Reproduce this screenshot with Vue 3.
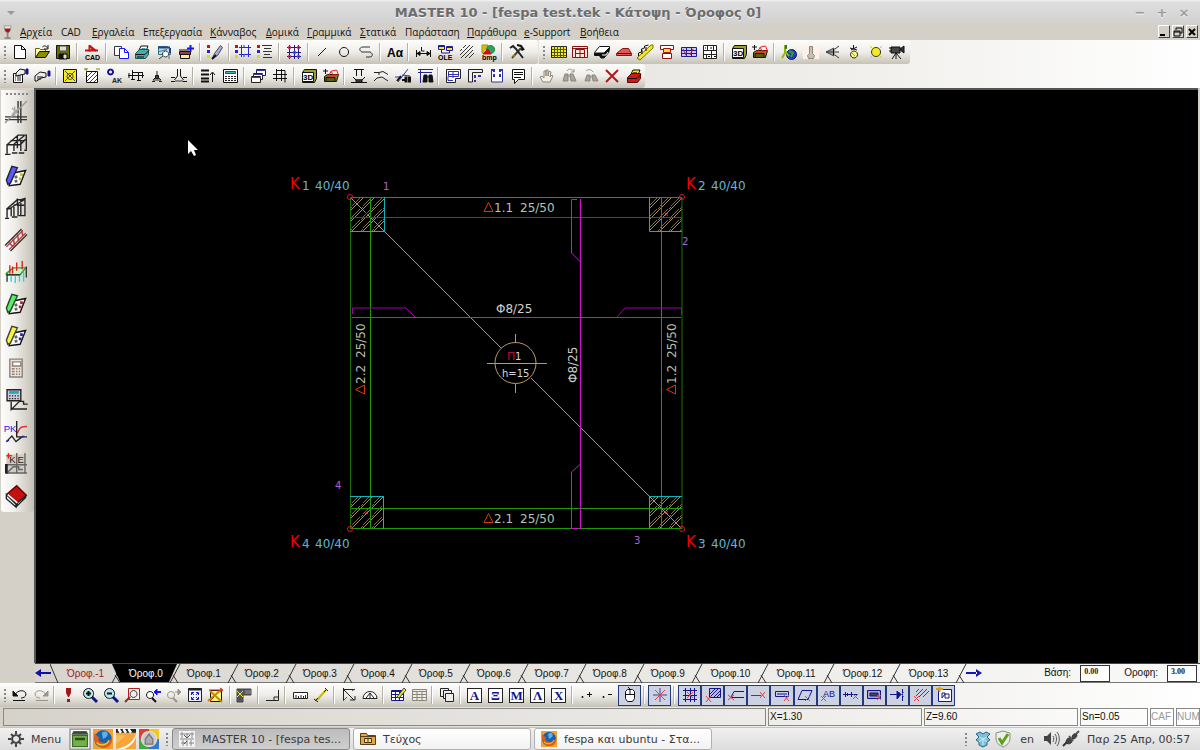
<script setup>
import { h, ref } from 'vue'

const K = '#111', N = '#14148c', R = '#d01010', G = '#9a9488', Y = '#f4ec20', T = 'text'

// Each shape is [path, stroke, fill, stroke width]; each caption is [T, string, x, y, size, colour].
const icons = {
  new: [['M2.5 1.5h7l4 4v9h-11zM9.5 1.5v4h4', K, '#fff']],
  open: [['M1.5 13.5v-9h4l1 1h5v3', '#666600', '#ffffa0'], ['M1.5 13.5l4-6h10l-4 6z', K, '#8c8c00'], ['M8.5 3c2-2 4-1 5 1M14 1v4h-4', K]],
  save: [['M1.5 1.5h13v13h-13z', K, '#6b6b00'], ['M4.5 2h7v5h-7z', '#555', '#deded2'], ['M4 10h8v5H4z', K, K], ['M9 11h2v3H9z', '#ddd', '#ddd']],
  cad: [['M5.5 1v6.5M6 2l6 5', R, 'none', 2], ['M1 6.5h13', R, 'none', 2], ['M7 4l3 2H7z', 'none', R], [T, 'CAD', 1, 16, 7, '#000']],
  copy: [['M1.5 2.5h7v9h-7z', '#334', '#fff'], ['M6.5 4.5h5l4 4v6h-9z', '#1414ff', '#fff'], ['M11.5 4.5v4h4', '#1414ff']],
  print: [['M5 6l2-4h7l-2 5', K, '#fff'], ['M1.5 9.5l4-4h9v5l-3 4h-10z', '#185858', '#4fa8a8'], ['M2 10.5h9l4-4M3 13h7', K], ['M7.5 4.5h4', '#30a0a0']],
  preview: [['M2.5 2.5h9l3 3v5h-12z', '#227878', '#bce0e0'], ['M2 3.500h12M14 4v5', '#2b3d90', 'none', 2], ['M3 7.500l8-2', '#3078a0'], ['M9.5 7a3 3 0 1 0 .1 0M7 12l-4 3', '#334', '#fff'], ['M13 9v6', '#667']],
  box: [['M1.5 7.5h11v3h-11z', K, '#94404c'], ['M2.5 10.5h9v4h-9z', K, '#fff080'], ['M1 6h10', K], ['M12.5 1v7M9 4.5h7', '#1414ff', 'none', 2]],
  brush: [['M0 1h3v3H0z', 'none', R], ['M0 6h3v3H0z', 'none', '#2020e0'], ['M0 11h3v3H0z', 'none', '#e8d800'], ['M5.5 14.5l2-5 6-8 2 2-5 8z', '#446', '#aab0d0'], ['M5 15l4-4', K, 'none', 2]],
  layers: [['M0 1h3v3H0z', 'none', R], ['M0 6h3v3H0z', 'none', '#2020e0'], ['M0 11h3v3H0z', 'none', '#e8d800'], ['M6.5 1v12M13.5 1v12M4 3.5h12M4 10.5h12', '#2626d8'], ['M9 1v2M9 11v2', '#2626d8']],
  legend: [['M0 1h3v3H0z', 'none', R], ['M0 6h3v3H0z', 'none', '#2020e0'], ['M0 11h3v3H0z', 'none', '#e8d800'], ['M5 1.5h10M7 4.5h7M6 7.5h9M7 10.5h6M6 13.5h9', '#333']],
  grid: [['M1 3.5h14M1 8.5h14M1 12.5h14M3.5 1v14M8.5 1v14M12.5 1v14', '#1c1c90'], ['M2.5 2.5h2v2h-2zM7.5 7.5h2v2h-2zM11.5 2.5h2v2h-2zM2.5 11.5h2v2h-2zM11.5 11.5h2v2h-2z', '#b03068']],
  line: [['M4 12l8-8', K]],
  circle: [['M8 3.5a4.5 4.5 0 1 0 .1 0', K]],
  curve: [['M12 3H5C1 3 1 7 4 8h8c3 1 3 5 0 5H8', '#333']],
  text: [[T, 'Aα', 0, 13, 12, '#000', 'bold']],
  dim: [['M1.5 6v7M15.5 6v7M2 9.5h13M6.5 3v4h3', K], ['M2 9.5l3-2v4zM15 9.5l-3-2v4z', K, K]],
  ole: [['M1.5 1.5h6v4h-6zM9.5 2.5h6v4h-6z', '#1c1c90', Y], ['M1 2.5h7M9 3.5h7M4.5 6v3h8v-3', '#1c1c90'], [T, 'OLE', 1, 16, 7, '#000']],
  hatch: [['M1 7l6-6M1 11L11 1M2 14L14 2M6 14l8-8M10 14l5-5', '#333'], ['M3 4l2 2M6 6l2 2M9 9l2 2', '#fff']],
  bmp: [['M1 1h6v8H1z', '#990', '#d8b820'], ['M9.5 1.5a4 4 0 1 0 .1 0', '#083', '#30a060'], ['M2 10l5-5 3 5z', R, R], [T, 'bmp', 1, 16, 7, '#000']],
  tools: [['M3 14L12 4', '#444', 'none', 2], ['M8 1l4 1 3 4M12 5l2 1', K, 'none', 2], ['M1 4l3-2 3 3 7 9', '#222', 'none', 2], ['M4 13l2-2', '#a08000', 'none', 2]],
  colYellow: [['M.5 2.5h15v11H.5z', '#222', Y], ['M1 5.5h14M1 8.5h14M1 11.5h14M3.500 2v12M6.500 2v12M9.500 2v12M12.500 2v12', '#555200']],
  wallRed: [['M.5 2.5h15v11H.5zM3.5 5.5h9v8h-9zM3 9.5h9M8 5v8', '#8c1010', '#ffe8e0'], ['M.5 4.5h15', '#8c1010']],
  slab: [['M.5 8.5l5-6h10v3l-5 6H.5z', K, '#fff'], ['M1 9h9l5-5v4l-5 6H7l-2-3H1z', K, K], ['M8 11h4l2-3', '#fff']],
  roof: [['M.5 9.5l6-5h6l3 5v2H.5z', '#901010', '#e05858'], ['M1 9.5h14', '#500']],
  stair: [['M0 14L14 1h2v3L3 16z', '#777000', Y], ['M1.500 12V9l3-1V5l3-1V2l4-1', K], ['M5 10V6M9 7V3', K]],
  footing: [['M1.5 1.5h13v4h-13zM3.5 9.5h9v5h-9z', '#8c1010', '#fff'], ['M4.5 4.5h7v4h-7z', '#b01010', Y]],
  truss: [['M.5 3.5h15v9H.5zM0 6.5h16M0 9.5h16M5.5 3v9M10.5 3v9', '#1c1c90', '#c9c9f4'], ['M2 5l3 6M12 5l-3 6', R]],
  plan: [['M1.5 1.5h13v13h-13zM1 6.5h13M1 10.5h13M5.5 1v5M9.5 6v8M4.5 10v4M11.5 1v5', '#222', '#fff'], ['M3 4h1M8 4h2M6 12.5h2M12 12.5h2', K, 'none', 1]],
  box3d: [['M1.5 4.5l2-3h12v9l-2 4h-12z', K, '#a0a020'], ['M1.5 4.5h11v9h-11z', K, '#fff'], [T, '3D', 2, 12, 8, '#000', 'bold']],
  render: [['M1.500 8.500l3-2h11l-2 7h-12z', K, '#84842a'], ['M3 9.500h9v4H3z', K, '#5c5c10'], ['M4.500 9l4-6 5-1 2 5M8 3l2 4h5M4 8h9', '#f02020'], ['M0 3h5M2.5 1v5', K]],
  globe: [['M10.5 5.5a5 5 0 1 0 .1 0', '#151570', '#2838c0'], ['M8 7l4 2-2 4', '#30a030', 'none', 2], ['M4 1v8l-3 5M4 7l4 5', '#8cba00', 'none', 2], ['M5 1v4', '#2a7a30', 'none', 2]],
  thermo: [['M0 1h16v14H0z', 'none', '#fff0e8'], ['M6.5 2.5h3v7l2 2-1 3h-5l-1-3 2-2z', '#8f8478', '#c8c0b6']],
  eye: [['M2 8l8-4v8z', '#444', '#a0a0a0'], ['M2 8h8M11 5l4-3M11 8h4M11 11l4 3', '#333'], ['M9.5 5v6', K]],
  lamp: [['M7.5 1v4M4 4l7 2M11 3L5 6', K], ['M8 7a3.5 3.5 0 1 0 .1 0', '#222', '#fff880'], ['M6 9l3 3', '#998']],
  sun: [['M2 2l12 12M14 2L2 14', '#e0c820'], ['M8 3.5a4.5 4.5 0 1 0 .1 0', '#333', Y]],
  camera: [['M2 3h9v6H2z', K, '#444'], ['M11 5l4-3v7l-4-3M0 4h3M0 7h3', K, '#333'], ['M7 9v6M7 9l-4 6M7 9l5 6', K]],
  propHand: [['M1.5 5.5h9v9h-9z', K, '#fff'], ['M3 8h1M5 8h4M3 10h1M5 10h4M3 12h1M5 12h4', '#222'], ['M4 5l4-4 5 1v4l-5 1-4 1z', K, '#eee'], ['M14 1h2v5h-2z', N, N]],
  hand: [['M1 8l5-4 6 1v4l-5 1-4 3H1z', K, '#eee'], ['M3 9h6M3 11h4', K], ['M14 3h2v5h-2z', N, N]],
  star: [['M1.5 1.5h13v13h-13z', K, Y], ['M8 5.5a3 3 0 1 0 .1 0M3 3l10 10M13 3L3 13', '#444']],
  hatchBox: [['M2.5 3.5h11v11h-11z', K, '#fff'], ['M3 9l5-5M3 13l9-9M6 14l7-7M10 14l3-3', '#444'], ['M0 1h4M2 0v3M12 1h4', '#880']],
  oak: [['M4.5 1.5a2.5 2.5 0 1 0 .1 0', N, 'none', 2], [T, 'AK', 6, 15, 7, '#222']],
  beam: [['M0 7.5h16M4.5 2v9M10.5 4v8M3 11.5h4M9 12.5h4M5 4.5h9M14.5 4v6M1 5v5', K]],
  support: [['M8 3v5M4 12l4-4 4 4zM3 13.5h3M10 13.5h3', '#222'], ['M6.5 7.500h3v3h-3z', K, '#444']],
  base: [['M6.500 1v7l-3 4M9.500 1v7l3 4', K], ['M0 13.500h16M0 9.500h4M12 9.500h4', K, 'none', 1], ['M4 12h8v2H4z', 'none', '#888']],
  levels: [['M1 2.5h8M1 6.5h8M1 10.5h8M1 13.5h8', K, 'none', 2], ['M12.5 14V5M10 7l2.5-3 2.5 3', K]],
  calc: [['M1.5 1.5h14v13h-14z', K, '#fff'], ['M3.5 3.5h10v2h-10z', '#066', '#40b8b8'], ['M3 8.500h2M6 8.500h2M9 8.500h2M12 8.500h2M3 10.500h2M6 10.500h2M9 10.500h2M12 10.500h2M3 12.500h2M6 12.500h2M9 12.500h2M12 12.500h2', '#222']],
  cascade: [['M6.5 1.5h9v6h-9z', '#222', '#fff'], ['M3.5 5.5h9v6h-9z', '#222', '#fff'], ['M1.5 8.5h9v6h-9z', '#222', '#fff'], ['M6 2.5h10M3 6.5h10M1 9.5h10', '#3c3ca0']],
  frame: [['M1 6.5h14M4.5 1v12M9.5 1v12M4 2.5h9v12M1 10.5h14', K]],
  pi: [['M3 1.5h10M5.5 1v7M10.5 1v7M2 9l3 3h6l3-3M0 14.5h16M8 12v2', K, 'none', 1], ['M5 12h6v2H5z', K, '#555']],
  arcs: [['M1 4.5h5l4-1 5 3M1 13l3-3 5-1 6 4M6 5v2', '#222']],
  cut: [['M3 14L13 1M7 7l8 1M0 9h6', '#3038a8'], ['M2 13l4-5M7 12h3', K, 'none', 2], ['M10.5 9.5h1v4h-1zM14 9.5h1v4h-1z', K, K, 2]],
  findFrame: [['M1 1.5h15M3.5 1v14M1 4.5h14', '#26268c'], ['M7 7h3v7H6zM12 7h3l1 7h-4zM9 9h4', K, K]],
  slabPlan: [['M1.5 1.5h14v9h-5v4h-9z', '#222', '#fff'], ['M3.5 3.5h10v5h-10zM8 3v7M3 6.5h10M3 8.5v4h5', '#3030b0']],
  corner: [['M1.5 14V1.5h14v3H5.500V14z', '#222', '#eee'], ['M8 8v2M8 12v2M7 8h2M11 8h3M12 7v2', '#3030b0', 'none', 2]],
  ushape: [['M2.5 2v12h11V2', '#3030b0', '#fff'], ['M2 2h3v2M11 4V2h3M5 6v3M11 6v3', '#3030b0', 'none', 2]],
  note: [['M2.5 1.5h12v10h-6l-4 4v-4h-2z', K, '#fff'], ['M4 4.5h9M4 6.5h9M4 9.5h7', K]],
  pan: [['M4 14l-3-5 2-1 2 2V3h2v5V2h2v6l1-5 2 1-1 5 2-2 1 1-3 6z', '#8c877c', '#f4eee4']],
  findGray: [['M4 6h3v7H2zM9 6h3l3 7h-5zM6 8h4', '#8b867c', '#aaa59a'], ['M6 3c2-3 5-2 7 1M13 1v3h-3', '#9a9488']],
  findGray2: [['M4 7h3v6H2zM9 7h3l3 6h-5zM6 9h4', '#8b867c', '#aaa59a'], ['M3 3c2-2 5-2 7 1', '#9a9488']],
  del: [['M2 2l12 12M14 2L2 14', '#b01818', 'none', 2]],
  printRed: [['M5 6l2-4h7l-2 5', K, Y], ['M1.5 9.5l4-4h9v5l-3 4h-10z', '#600', '#d01818'], ['M2 10.5h9l4-4', K], ['M7 4.5h4', '#805000']],
  undo: [['M3 8c2-5 10-6 11-1 0 3-3 4-5 4M1 13.5h12', K], ['M1 4v5h5z', K, K]],
  redo: [['M13 8C11 3 3 2 2 7c0 3 3 4 5 4M3 13.5h12', G], ['M15 4v5h-5z', G, G]],
  bang: [['M6 1h5v5l-2 4H8L6 6zM7 12h3v3H7z', 'none', '#a01818']],
  zoomIn: [['M10 10l5 5', N, 'none', 3], ['M6.5 1.5a5 5 0 1 0 .1 0', K, '#b4e8ee'], ['M4 6.5h5M6.5 4v5', K, 'none', 2]],
  zoomOut: [['M10 10l5 5', N, 'none', 3], ['M6.5 1.5a5 5 0 1 0 .1 0', K, '#b4e8ee'], ['M4 6.5h5', K, 'none', 2]],
  zoomWin: [['M4.5 1.5h11v11h-11z', '#b02020', '#fff0ec'], ['M9.5 3.5a3.5 3.5 0 1 0 .1 0', '#333', '#eee'], ['M6 10l-5 5', '#803030', 'none', 2]],
  zoomPrev: [['M5 4.5a3.5 3.5 0 1 0 .1 0', K, '#fff'], ['M7 11l4 4', K, 'none', 2], ['M9 5h7', '#1414ff', 'none', 2], ['M12 2L9 5l3 3z', '#1414ff', '#1414ff']],
  zoomNext: [['M5 4.5a3.5 3.5 0 1 0 .1 0', G], ['M7 11l4 4', G, 'none', 2], ['M9 5h5M12 2l3 3-3 3z', G, G]],
  zoomAll: [['M1.5 1.5h13v13h-13z', '#222', '#eef'], ['M1 2.500h14', '#222', 'none', 2], ['M4.500 8V5.500H7M9 5.500h2.500V8M4.500 10v2.500H7M9 12.500h2.500V10M5 6l2 2M11 6L9 8M5 12l2-2M11 12l-2-2', '#1c1cc0']],
  zoomEdit: [['M2.5 3.5h11v11h-11z', K, '#fff480'], ['M0 14L14 2M2 4l12 11', '#b89000', 'none', 2], ['M1 3h13M12 1l3 2-3 2M2 14l4-4', '#d02020']],
  angleHatch: [['M1 2h14v6H7v7H1z', '#444', '#555'], ['M1 4l6 6M7 4l-6 6', Y, 'none', 1], ['M9 3h6v4H9z', 'none', '#777']],
  perp: [['M2 13.5h12.5V3M10 13v-3h4', '#222', 'none', 1]],
  ruler: [['M1.5 5.5h14v6h-14z', '#222', '#fff'], ['M4 11V8M6.5 11V9M9 11V8M11.5 11V9M13.5 11V8', '#222']],
  measure: [['M4 13L13 3', '#c8b800', 'none', 2], ['M1 12l4 3M12 1l3 3M2 14l3-3M11 5l3-3', '#222']],
  angle: [['M2.5 1v13M2 2l11 11M2 2.5h12M9 13h5v-4', '#222'], ['M11 4l3-2M2 14l4-4', '#555']],
  protractor: [['M1 11.5a7 7 0 0 1 14 0zM8 11V6M4 11l4-5 4 5', '#222', '#fff']],
  tableEdit: [['M1.5 3.5h12v10h-12z', N, '#fff'], ['M1 4.5h13M1 7.5h12M1 10.5h12M5.5 4v9M9.5 4v9', N], ['M7 10l7-9 2 2-7 8z', '#444', Y]],
  tableGray: [['M1.5 2.5h14v11h-14zM1 4.5h14M1 7.5h14M1 10.5h14M6 4v9M11 4v9', '#8b867c', '#f0ece4']],
  stack: [['M1.5 1.5h8v8h-8z', '#222', '#eee'], ['M4.5 3.5h8v8h-8z', '#222', '#eee'], ['M6.5 6.5h8v8h-8z', '#222', '#eee']],
  dotPlus: [['M3 9.500h1v1H3z', K, K], ['M8 7.5h5M10.5 5v5', K]],
  dotMinus: [['M3 9.500h1v1H3z', K, K], ['M8 7.5h4', K]],
  mouse: [['M3.500 4.500l2-2h5l2 2v7l-2 3h-5l-2-3z', K, '#fff'], ['M8 2v5M4 7.500h8M8 2L6 0', K]],
  snap: [['M8 1v14M1 8h14', '#4040a8'], ['M3 3l10 10M13 3L3 13', '#e04040']],
  snapGrid: [['M1 3.5h14M1 8.5h14M1 12.5h14M3.5 1v14M8.5 1v14M12.5 1v14', N], ['M5 5l6 6M11 5l-6 6', '#e04040']],
  snapHatch: [['M4.5 1.5h11v9h-11z', N, '#b8bcdc'], ['M5 7l5-5M5 10l8-8M9 10l6-6M12 10l3-3', N], ['M1 9l5 6M6 9l-5 6', '#e04040']],
  snapEnd: [['M16 4.500H6L3 10M16 10.500H3', N], ['M0 8l6 5M6 8l-6 5', '#e04040']],
  snapLine: [['M0 8.5h10', '#3c3ca0'], ['M9 5l5 6M14 5l-5 6', '#e04040']],
  snapWall: [['M1.5 4.5h13v5h-13zM3 7h10', N], ['M10 8l5 6M15 8l-5 6', '#e04040']],
  snapFace: [['M5 3.5h10l-4 9H1z', N], ['M8 9l5 5M13 9l-5 5', '#e04040']],
  snapText: [[T, 'AB', 3, 10, 9, '#14148c'], ['M1 9l5 5M6 9l-5 5', '#e04040']],
  snapDim: [['M0 7.5h15M2.5 5v5M8.5 5v5M2 6l3 3M5 6l-3 3', N], ['M10 7l5 5M15 7l-5 5', '#e04040']],
  snapRect: [['M1.5 3.5h13v8h-13z', N, '#aab'], ['M4 6h8v3H4z', N, '#445'], ['M11 8l4 5M15 8l-4 5', '#e04040']],
  snapArrow: [['M0 7.5h8M12.5 2v12', N], ['M7 4l4 4-4 4z', N, N], ['M9 5l5 5M14 5l-5 5', '#e04040']],
  snapFill: [['M3 9l7-7M6 10l8-8M10 10l6-6M3 5l3-3', '#3c3ca0'], ['M1 9l5 5M6 9l-5 5', '#e04040']],
  snapNode: [['M2.5 2.5h13v12h-13z', N, '#fff'], ['M6 6h3v5h4V7H9l-3 4z', N], ['M0 2h7M3.5 0v5', '#e0a010', 'none', 2]],
  axes: [['M0 11.5h16M0 13.5h16M9.5 0v16M11.5 0v16', '#333'], ['M0 16L16 0', '#999'], ['M5 5l5 5M10 5l-5 5M7 4v7', '#aaa']],
  frame3d: [['M1.5 15V8.5L9.5 1.5h6V12M6.5 13V8.5M11.5 13V5.5M1 8.5h10l4-4M4 5.5h10M6.5 8L14 2M9 2v9', '#222'], ['M0 15.5h4M5 14.5h4M10 14.5h4M14 12.500h2', '#222']],
  rollBlue: [['M5 6l10-2-4 10-8 1z', K, '#fff'], ['M7 9l2-.500M7 12l2-.500', '#666', 'none', 2], ['M11 7h2M10 10h2', '#c8b810', 'none', 2], ['M1 11L5 1l4 1-5 11-2 1z', '#223', '#5c5cf4']],
  frame3dBold: [['M1.5 15V9l3-1v6M6.5 14V6l3-1v9M11.5 13V2l3-1v12M1 9l8-7h6M4 8l10-6', '#222', 'none', 1], ['M0 15.5h3M5 14.5h4M10 13.5h5M9 1v5h5', '#222']],
  ladder: [['M0 12L12 0M4 16L16 4', '#333', 'none', 1], ['M1 13L13 1M3 15L15 3', '#a04040', 'none', 1], ['M3 10l3 3M6 7l1 5M9 4l1 5M12 1l1 4', '#b83030']],
  loads: [['M1 9l5-4h9l-4 5H1z', '#30a030', '#c4f4c0'], ['M3.5 3v6M8.5 1v6M12.5 0v6M5.5 4v5', '#e02020'], ['M4.5 11v4M7.5 11v5M10.5 10v5M13.5 8v7', '#20d8d8'], ['M1.5 15V9M15.5 4v8M1 10h10', '#333']],
  rollGreen: [['M5 6l10-2-4 10-8 1z', K, '#fff'], ['M7 9l2-.500M7 12l2-.500', '#666', 'none', 2], ['M11 7h2M10 10h2', '#c02020', 'none', 2], ['M1 11L5 1l4 1-5 11-2 1z', '#243', '#60ec60']],
  rollYellow: [['M5 6l10-2-4 10-8 1z', K, '#fff'], ['M7 9l2-.500M7 12l2-.500', '#666', 'none', 2], ['M11 7h2M10 10h2', '#2020c0', 'none', 2], ['M1 11L5 1l4 1-5 11-2 1z', '#443', '#f4f448']],
  calcGray: [['M3.5 1.5h9v13h-9z', '#8b8078', '#ece4da'], ['M5.5 3.5h6v3h-6z', '#8b8078', '#fff'], ['M5 8.5h2M8 8.5h1M10 8.5h1M5 10.5h2M8 10.5h1M10 10.5h1M5 12.5h2M8 12.5h1M10 12.5h1', '#8b8078']],
  calcFrame: [['M1.5.5h10v8h-10z', '#222', '#ccd'], ['M3 2.5h7', '#20a8b8', 'none', 2], ['M3 5h1M5 5h1M7 5h1M9 5h1M3 7h1M5 7h1M7 7h1M9 7h1', '#222'], ['M4.5 9v6l6-6h3v2h3M4 14.5h12', '#222']],
  pk: [[T, 'PK', -1, 8, 7, '#2020f0', 'normal'], ['M9 9c2-5 3-5 7-5', '#e03030'], ['M8.5 0v11M8 11.5h8M1 15l4-4 3 4 5-4', '#222'], ['M1 15l2-1M12 12l2-1', '#2020f0']],
  ke: [['M1 1h15v14H1z', 'none', '#d0ccc4'], ['M1 8.5h15M1 14.5h15M8.5 0v15M14.5 0v15M2 14l4-4h4v2h3', '#666'], ['M1 8v7', '#222', 'none', 2], [T, 'K', 3, 7, 7, '#222', 'normal'], [T, 'E', 9, 7, 7, '#222', 'normal'], ['M2.5 0v4M1 2h4', '#f02020', 'none', 1]],
  book: [['M1.5 6.5l7-6 7 7-7 7z', '#600', '#c41010'], ['M1 7v3l7 6v-2zM9 15l6-6V8l-6 5z', '#222', '#fff'], ['M2 7l7 6', '#fff']],
  prevFloor: [['M5 7h11v2H5zM0 8l6-4v8z', 'none', '#1010a8']],
  nextFloor: [['M0 7h11v2H0zM16 8l-6-4v8z', 'none', '#1414c0']],
  glass: [['M3.5 1h8l-1 6-2 2h-2l-2-2z', '#999', '#e8e8e8'], ['M4 4h7l-1 3-2 2-3-2z', 'none', '#b01010'], ['M7.5 9v5M4 15h7', '#888', 'none', 2]],
  gear: [['M8 0v3M8 13v3M0 8h3M13 8h3M3 3l2 2M11 11l2 2M13 3l-2 2M5 11l-2 2', '#444', 'none', 2], ['M8 4a4 4 0 1 0 .1 0', '#444', 'none', 2]],
  drive: [['M0 0h16v16H0z', '#888', '#fff'], ['M2 4l1-2h10l1 2z', '#4a5a40', '#38463a'], ['M2 5h12v9H2z', '#3c6a28', '#74b048'], ['M4 8h8', '#2c4a1c', 'none', 2]],
  firefox: [['M0 0h16v16H0z', 'none', '#f4a030'], ['M8 1a7 7 0 1 0 .1 0', 'none', '#1c60b0'], ['M7 3c4-3 6 1 4 3s-2 1-3 2', 'none', '#58b4e4'], ['M1 3c-1 8 3 12 8 12s7-5 6-9c-1 4-3 6-6 5-5 0-5-3-4-4L1 3z', 'none', '#e06010'], ['M3 11c3 3 8 2 10-2', '#f8d040']],
  clapper: [['M0 0h16v16H0z', 'none', '#f6a638'], ['M0 0h16v3H0z', 'none', '#222'], ['M2 0l2 3M6 0l2 3M10 0l2 3', '#fff', 'none', 2], ['M16 4C14 10 9 14 1 16h5c6-2 9-6 10-10z', 'none', '#fff'], ['M0 5h8l-8 7z', 'none', '#f8bc60']],
  disk: [['M0 0h8v8H0z', 'none', '#d84038'], ['M8 0h8v8H8z', 'none', '#f0c820'], ['M0 8h8v8H0z', 'none', '#48a848'], ['M8 8h8v8H8z', 'none', '#3878c8'], ['M8 2a6 6 0 1 0 .1 0', '#ddd', '#ccc'], ['M5 12V8l3-4 3 4v4z', '#777', '#aaa']],
  master: [['M0 0h16v16H0z', 'none', '#f2f2f2'], ['M1 3h14M1 8h6M9 8h6M3 1v6M8 2v13M13 1v6M2 12h5M10 12h5M4 9v6M12 9v6', '#888', 'none', 1], ['M5 4l3 3M11 4L8 7M5 13l3-3', '#555']],
  folder: [['M.5 13.5v-11h6l1 2h8v9z', '#5a4010', '#e8a83c'], ['M1 5.5h14', '#5a4010'], ['M4.5 7.5h7v4h-7zM8 7v5', '#4a3410', '#f8d890']],
  dropbox: [['M1 3l4-2 3 2 3-2 4 2-3 3 3 3-3 2v3l-4 2-4-2v-3L1 9l3-3z', '#286484', '#7cc0dc'], ['M4 6l4 2 4-2M8 8v6M8 8l-4 3M8 8l4 3', '#d0f0fc']],
  shield: [['M8 0l7 2v5c0 5-3 7-7 9-4-2-7-4-7-9V2z', '#889080', '#eceee8'], ['M4 7l3 5 6-9', '#60a020', 'none', 3]],
  volume: [['M1 5h3l4-4v13l-4-4H1z', 'none', '#444'], ['M10 5c1 2 1 4 0 6M12 3c2 3 2 7 0 10M14 1c3 4 3 10 0 14', '#555']],
  plug: [['M0 15l4-4', '#333', 'none', 2], ['M3 12c0-3 1-5 4-5l2 3c0 2-3 4-6 2zM9 7c0-3 2-5 4-4l1 1c0 2-2 4-4 4z', '#333', '#444'], ['M13 3l3-3M6 5l4 5', '#555', 'none', 2]],
}

const Icon = (props) =>
  h('svg', { class: 'icon', viewBox: '0 0 16 16', 'aria-hidden': 'true' },
    icons[props.name].map((s) =>
      s[0] === T
        ? h('text', { x: s[2], y: s[3], 'font-size': s[4], fill: s[5], 'font-weight': s[6] || (s[4] > 7 ? 'normal' : 'bold') }, s[1])
        : h('path', { d: s[0], stroke: s[1], fill: s[2] || 'none', 'stroke-width': s[3] || 1 })))
Icon.props = ['name']

// "|" is a separator.
const list = (s) => s.trim().split(/\s+/)
const standardBar = list('new open save | cad | copy print preview box | brush | layers legend | grid | line circle curve | text | dim ole hatch bmp | tools')
const elementBar = list('colYellow wallRed slab roof stair footing truss plan | box3d render | globe thermo eye lamp sun camera')
const editBar = list('propHand hand | star hatchBox oak beam support base | levels calc | cascade frame | box3d render | pi arcs cut findFrame | slabPlan corner ushape note | pan findGray findGray2 del printRed')
const viewBar = list('undo redo | bang zoomIn zoomOut zoomWin zoomPrev zoomNext zoomAll zoomEdit | angleHatch | perp | ruler measure | angle protractor | tableEdit tableGray | stack | A Ξ M Λ X | dotPlus dotMinus mouse | snap | snapGrid snapHatch snapEnd snapLine snapWall snapFace snapText snapDim snapRect snapArrow snapFill snapNode')
const sideBar = list('axes frame3d rollBlue frame3dBold ladder loads rollGreen rollYellow calcGray calcFrame pk ke book')
const isOn = (n) => n === 'mouse' || n.startsWith('snap')

const menus = [
  ['Α', 'ρχεία', 41], ['', 'CAD', 31], ['Ε', 'ργαλεία', 51], ['', 'Επεξεργασία', 67], ['Κ', 'άνναβος', 56], ['Δ', 'ομικά', 41],
  ['Γ', 'ραμμικά', 53], ['Σ', 'τατικά', 45], ['', 'Παράσταση', 62], ['Π', 'αράθυρα', 57], ['e', '-Support', 56], ['Β', 'οήθεια', 50],
]
const floors = ['-1', ...Array.from({ length: 14 }, (_, i) => String(i))]
const active = ref('0')
const base = ref('0.00')
const top = ref('3.00')

const columns = [
  { n: 1, x: 350, y: 197, edge: 'M384.5 197v34.5H350', lx: 290, ly: 190 },
  { n: 2, x: 649, y: 197, edge: 'M649.5 197v34.5H682', lx: 686, ly: 190 },
  { n: 3, x: 649, y: 496, edge: 'M649.5 529v-32.5H682', lx: 686, ly: 548 },
  { n: 4, x: 350, y: 496, edge: 'M383.5 529v-32.5H350', lx: 290, ly: 548 },
]
const corners = [[350, 197], [682, 197], [682, 529], [350, 529]]
const beams = [
  { t: '1.1', at: 'translate(483 212)' }, { t: '2.1', at: 'translate(483 523)' },
  { t: '2.2', at: 'translate(365 395) rotate(-90)' }, { t: '1.2', at: 'translate(676 395) rotate(-90)' },
]
const nodes = [[1, 383, 190], [2, 682, 245], [3, 634, 544], [4, 335, 489]]
</script>

<template>
  <div class="desktop">
    <header class="title">
      <span class="chev"></span>
      <h1>MASTER 10 - [fespa test.tek - Κάτοψη - Όροφος 0]</h1>
      <div class="wm"><button aria-label="Minimize">−</button><button aria-label="Maximize">+</button><button aria-label="Close">×</button></div>
    </header>

    <nav class="menu">
      <Icon name="glass" />
      <button v-for="m in menus" :key="m[1]" :style="{ width: m[2] + 'px' }"><u>{{ m[0] }}</u>{{ m[1] }}</button>
      <div class="mdi">
        <button aria-label="Minimize document"><svg viewBox="0 0 10 10"><path d="M1 8h5" stroke="#000" stroke-width="2" /></svg></button>
        <button aria-label="Restore document"><svg viewBox="0 0 10 10"><path d="M3 1h6v5H7M3 1v2M1 4h6v5H1zM1 5h6" fill="none" stroke="#000" /></svg></button>
        <button aria-label="Close document"><svg viewBox="0 0 10 10"><path d="M2 2l6 6M8 2L2 8" stroke="#000" stroke-width="2" /></svg></button>
      </div>
    </nav>

    <div class="dock">
      <div class="row">
        <div class="bar standard"><i class="grip"></i>
          <template v-for="(n, i) in standardBar" :key="i"><i v-if="n === '|'" class="sep"></i><button v-else class="tool" :aria-label="n"><Icon :name="n" /></button></template>
        </div>
        <div class="bar element"><i class="grip"></i>
          <template v-for="(n, i) in elementBar" :key="i"><i v-if="n === '|'" class="sep"></i><button v-else class="tool" :aria-label="n"><Icon :name="n" /></button></template>
        </div>
      </div>
      <div class="row">
        <div class="bar edit"><i class="grip"></i>
          <template v-for="(n, i) in editBar" :key="i"><i v-if="n === '|'" class="sep"></i><button v-else class="tool" :aria-label="n"><Icon :name="n" /></button></template>
        </div>
      </div>
    </div>

    <main>
      <aside>
        <div class="side"><i class="hgrip"></i>
          <div class="sidegrid"><button v-for="n in sideBar" :key="n" class="tool" :aria-label="n"><Icon :name="n" /></button></div>
        </div>
      </aside>
      <div class="canvas">
        <svg class="drawing" role="img" aria-label="Κάτοψη">
          <defs>
            <pattern id="hatch" width="11" height="11" patternUnits="userSpaceOnUse">
              <path d="M-1 12L12-1M-1 1L1-1M10 12l2-2" stroke="#a89058" fill="none" />
              <path d="M-1 9L9-1M8 12l4-4" stroke="#807044" fill="none" />
            </pattern>
          </defs>
          <g transform="translate(-36 -90)">
            <rect v-for="c in columns" :key="c.n" :x="c.x" :y="c.y" :width="c.x > 600 ? 33 : 34" :height="c.y > 400 ? 33 : 34" fill="url(#hatch)" />
            <g class="tan"><path d="M350 197L501 348M531 378L682 529M487 363.5h60M515.5 334v9M515.5 384v9" /><circle cx="515.5" cy="363" r="20.5" /></g>
            <g class="green">
              <path d="M350 197.5h332M350 508.5h332M370.5 197v332M661.5 197v332M350 528.5h332" />
              <path class="dim" d="M350.5 197v332M682 197v332M350 217.5h332" />
            </g>
            <path v-for="c in columns" :key="c.n" class="cyan" :d="c.edge" />
            <g class="steel">
              <path d="M352 317.5h329M580.5 199v330M577 199.5h-5.5V253l9 9M580.5 464l-9 8v56.5h6" />
              <path class="dim" d="M352.5 314v-6H406l9 9M617 317l8-9h56.5v6" />
            </g>
            <circle v-for="c in corners" :key="c.join()" class="node" :cx="c[0]" :cy="c[1]" r="2.5" />
            <path class="node" d="M365 212l3 3M368 212l-3 3M665 213l3 3M668 213l-3 3M665 511l3 3M668 511l-3 3M365 511l3 3M368 511l-3 3" />
            <g v-for="c in columns" :key="c.n" class="label">
              <text class="k" :x="c.lx" :y="c.ly - 1">K</text>
              <text class="size" :x="c.lx + 12" :y="c.ly">{{ c.n }}</text>
              <text class="size" :x="c.lx + 25" :y="c.ly">40/40</text>
            </g>
            <g v-for="b in beams" :key="b.t" class="label" :transform="b.at">
              <path class="delta" d="M1-.5h9l-4.500-9z" /><text class="beam" x="11" y="0">{{ b.t }}</text><text class="beam" x="37" y="0">25/50</text>
            </g>
            <g class="label">
              <text class="bar8" x="496" y="313">Φ8/25</text>
              <text class="bar8" transform="translate(577 383) rotate(-90)">Φ8/25</text>
              <text class="pi" x="507" y="360">Π</text><text class="slabno" x="515" y="360">1</text>
              <text class="slabno" x="502" y="377">h=15</text>
              <text v-for="n in nodes" :key="n[0]" class="nodeno" :x="n[1]" :y="n[2]">{{ n[0] }}</text>
            </g>
            <path d="M188 140v14l3-3 3 5 2-1-2-5h4z" fill="#fff" />
          </g>
        </svg>
      </div>
    </main>

    <div class="floors">
      <button class="arrow" aria-label="Previous floor"><Icon name="prevFloor" /></button>
      <svg class="edge first" viewBox="0 0 8 19"><path d="M0 0l8 19" /></svg>
      <button v-for="f in floors" :key="f" class="tab" :class="{ on: f === active, neg: f === '-1', wide: f.length > 1 && f !== '-1' }" @click="active = f">
        <span>Όροφ.{{ f }}</span>
        <svg class="edge" viewBox="0 0 14 19"><path d="M12 0L2 19M5 11l5 8" /></svg>
      </button>
      <button class="arrow next" aria-label="Next floor"><Icon name="nextFloor" /></button>
      <label class="lb" for="base">Βάση:</label><input id="base" v-model="base">
      <label class="lt" for="top">Οροφη:</label><input id="top" v-model="top">
    </div>

    <div class="dock lower">
      <div class="bar view"><i class="grip"></i>
        <template v-for="(n, i) in viewBar" :key="i">
          <i v-if="n === '|'" class="sep"></i>
          <button v-else class="tool" :class="{ pressed: isOn(n) }" :aria-label="n"><Icon v-if="icons[n]" :name="n" /><b v-else class="letter">{{ n }}</b></button>
        </template>
      </div>
    </div>

    <footer class="status">
      <span class="msg"></span><span class="xy">X=1.30</span><span class="xy">Z=9.60</span><span class="sn">Sn=0.05</span><span class="lock">CAF</span><span class="lock">NUM</span>
    </footer>

    <footer class="panel">
      <button class="start"><Icon name="gear" />Menu</button>
      <button class="launch" aria-label="Files"><Icon name="drive" /></button>
      <button class="launch" aria-label="Firefox"><Icon name="firefox" /></button>
      <button class="launch" aria-label="Movies"><Icon name="clapper" /></button>
      <button class="launch" aria-label="Disks"><Icon name="disk" /></button>
      <i class="grip"></i>
      <button class="task current"><Icon name="master" />MASTER 10 - [fespa tes...</button>
      <button class="task"><Icon name="folder" />Τεύχος</button>
      <button class="task"><Icon name="firefox" />fespa και ubuntu - Στα...</button>
      <div class="tray"><i class="grip"></i><Icon name="dropbox" /><Icon name="shield" /><span class="lang">en</span><Icon name="volume" /><Icon name="plug" /><time>Παρ 25 Απρ, 00:57</time></div>
    </footer>
  </div>
</template>

<style>
body { margin: 0; background: #d4d0c8; }
</style>

<style scoped>
.desktop { display: flex; flex-direction: column; min-height: 100vh; background: #d4d0c8; font-family: "Liberation Sans", sans-serif; font-size: 10px; color: #111; overflow: hidden; }
.desktop * { box-sizing: border-box; }
button { font: inherit; color: inherit; border: 0; background: none; padding: 0; margin: 0; white-space: nowrap; }
.icon { width: 16px; height: 16px; flex: none; display: block; overflow: visible; }

.title { height: 23px; flex: none; display: flex; align-items: center; padding: 2px 5px 0 7px; background: linear-gradient(#f4f4f4, #dedede 2px, #d2d2d2); font-family: "DejaVu Sans", sans-serif; color: #6c6c6c; }
.chev { border: 4px solid transparent; border-top-color: #999; border-bottom: 0; }
h1 { flex: 1; margin: 0; padding-left: 12px; font-size: 13px; line-height: 16px; text-align: center; text-shadow: 0 1px #f4f4f4; white-space: nowrap; }
.wm { display: flex; color: #999; font-weight: bold; font-size: 13px; }
.wm button { width: 22px; line-height: 16px; text-shadow: 0 1px #f4f4f4; }

.menu { height: 17px; flex: none; display: flex; align-items: center; padding: 0 2px 0 0; font-family: "Open Sans", sans-serif; }
.menu > .icon { margin-right: 4px; height: 14px; }
.menu > button { text-align: left; line-height: 17px; padding-top: 2px; }
.menu u { text-underline-offset: 1px; }
.mdi { margin-left: auto; display: flex; gap: 2px; }
.mdi button { width: 12px; height: 13px; border: 1px solid; border-color: #fff #444 #444 #fff; background: #d4d0c8; }
.mdi svg { width: 10px; height: 10px; display: block; }

.dock { flex: none; background: linear-gradient(90deg, #d6d2ca, #f2f1ee 75%, #fff); }
.row { display: flex; height: 24px; }
.bar { height: 24px; display: flex; align-items: center; padding-left: 1px; border-radius: 0 3px 3px 0; background: linear-gradient(#fdfdfc, #efede9 50%, #c6c2b6); }
.standard { width: 538px; padding-right: 10px; }
.element { width: 371px; margin-left: 1px; padding-right: 2px; }
.edit { width: 645px; }
.view { width: 955px; }
.grip { flex: none; width: 8px; height: 14px; background: radial-gradient(circle at 4px 2px, #888 1px, transparent 1px) 0 0 / 8px 4px; }
.tool { flex: 22 1 0; min-width: 0; height: 22px; display: flex; align-items: center; justify-content: center; }
.sep { flex: 7 1 0; height: 18px; background: linear-gradient(90deg, transparent 2px, #b4b0a6 2px, #b4b0a6 3px, #fff 3px, #fff 4px, transparent 4px); }
.pressed { border: 1px solid #24387c; background: #ccd2e2; height: 21px; }
.letter { width: 15px; height: 15px; border: 1px solid #222; background: #fff; color: #14148c; font: bold 13px/13px "Liberation Serif", serif; text-align: center; }

main { flex: 1; display: flex; min-height: 300px; }
aside { width: 34px; flex: none; padding: 2px 0 0 1px; }
.side { background: linear-gradient(90deg, #fdfdfc, #f0eeea 40%, #c4c0b4); border-radius: 0 0 3px 3px; padding-top: 2px; }
.hgrip { display: block; height: 4px; margin: 0 6px 0 4px; background: radial-gradient(circle at 2px 2px, #888 1px, transparent 1px) 0 0 / 4px 4px; }
.sidegrid { display: grid; grid-auto-rows: 1fr; height: 416px; padding-right: 3px; margin-bottom: 2px; }
.sidegrid .tool { height: auto; }
.sidegrid .icon { width: 22px; height: 22px; }
.canvas { flex: 1; display: flex; background: #000; border: solid #555; border-width: 2px 0 0 2px; margin-right: 2px; }
.drawing { flex: 1; display: block; min-width: 0; height: auto; }
.drawing path, .drawing circle { fill: none; }
.drawing path[fill="#fff"] { fill: #fff; }
.tan { stroke: #b89868; }
.green { stroke: #1f9a00; }
.green .dim { stroke: #1a7000; }
.cyan { stroke: #10b4b8; }
.steel { stroke: #d010d0; }
.steel .dim { stroke: #a000a8; }
.node { stroke: #e01038; }
.label { font-family: "DejaVu Sans", sans-serif; font-size: 12px; }
.k { font-size: 15px; fill: #f00000; }
.size { fill: #68b4d0; }
.delta { stroke: #d03c08; }
.beam { fill: #b4c4b0; }
.bar8 { fill: #d0d0d0; }
.pi { font-size: 11px; fill: #c00838; }
.slabno { font-size: 10px; fill: #d8d8d8; }
.nodeno { font-size: 10px; fill: #b060d0; }

.floors { height: 20px; flex: none; display: flex; align-items: stretch; margin-left: 35px; padding-right: 3px; border-top: 1px solid #444; border-bottom: 1px solid #777; background: linear-gradient(90deg, #d8d4cd, #f0efec 70%, #fafaf9); }
.arrow { width: 15px; display: flex; align-items: center; }
.next { margin-right: auto; margin-left: -2px; }
.edge { width: 14px; height: 19px; flex: none; fill: none; stroke: #333; }
.edge.first { width: 8px; margin-right: -8px; }
.tab { width: 58px; display: flex; align-items: center; justify-content: space-between; position: relative; padding-left: 5px; line-height: 17px; }
.tab.neg { width: 74px; padding-left: 17px; color: #a01818; }
.tab.wide { width: 66px; padding-left: 7px; }
.tab span { position: relative; white-space: nowrap; text-align: left; }
.tab.on { color: #fff; }
.tab.on::before { content: ""; position: absolute; left: -12px; top: 0; width: 65px; height: 100%; background: #000; clip-path: polygon(0 0, 100% 0, calc(100% - 8px) 100%, 8px 100%); }
.floors label { line-height: 18px; }
.floors input { width: 30px; height: 17px; margin-top: 1px; border: 1px solid #333; background: #fff; padding: 0 3px 4px; font: bold 8px "Liberation Serif", serif; color: #222; }
.lb { margin-right: 9px; }
.lt { margin: 0 9px 0 14px; }

.status { height: 20px; flex: none; display: flex; gap: 2px; padding: 1px 0 1px 3px; background: linear-gradient(90deg, #d6d2ca, #f2f1ee 75%, #fff); line-height: 16px; }
.status span { border: 1px solid #888; padding-left: 1px; white-space: nowrap; }
.msg { flex: 1; }
.xy { width: 154px; }
.sn { width: 68px; }
.status .lock { width: 24px; color: #999; padding-left: 0; }

.panel { height: 23px; flex: none; display: flex; align-items: center; padding: 0 5px 0 8px; background: linear-gradient(#f0f0f0, #dcdcdc); border-top: 1px solid #c4c4c4; font-family: "DejaVu Sans", sans-serif; font-size: 11px; color: #3a3a3a; }
.start { display: flex; align-items: center; gap: 7px; width: 62px; }
.launch { width: 23px; display: flex; }
.launch .icon { width: 20px; height: 20px; }
.panel .grip { margin: 0 1px; }
.task { display: flex; align-items: center; gap: 7px; width: 178px; height: 22px; margin-right: 3px; padding-left: 6px; border: 1px solid #b0b0b0; border-radius: 3px; background: linear-gradient(#fff, #f2f2f2); }
.task.current { background: linear-gradient(#bcbcbc, #cfcfcf); border-color: #8a8a8a; }
.tray { margin-left: auto; display: flex; align-items: center; gap: 4px; }
.lang { margin: 0 5px; }
.tray time { margin-left: 4px; width: 108px; white-space: nowrap; }
</style>
